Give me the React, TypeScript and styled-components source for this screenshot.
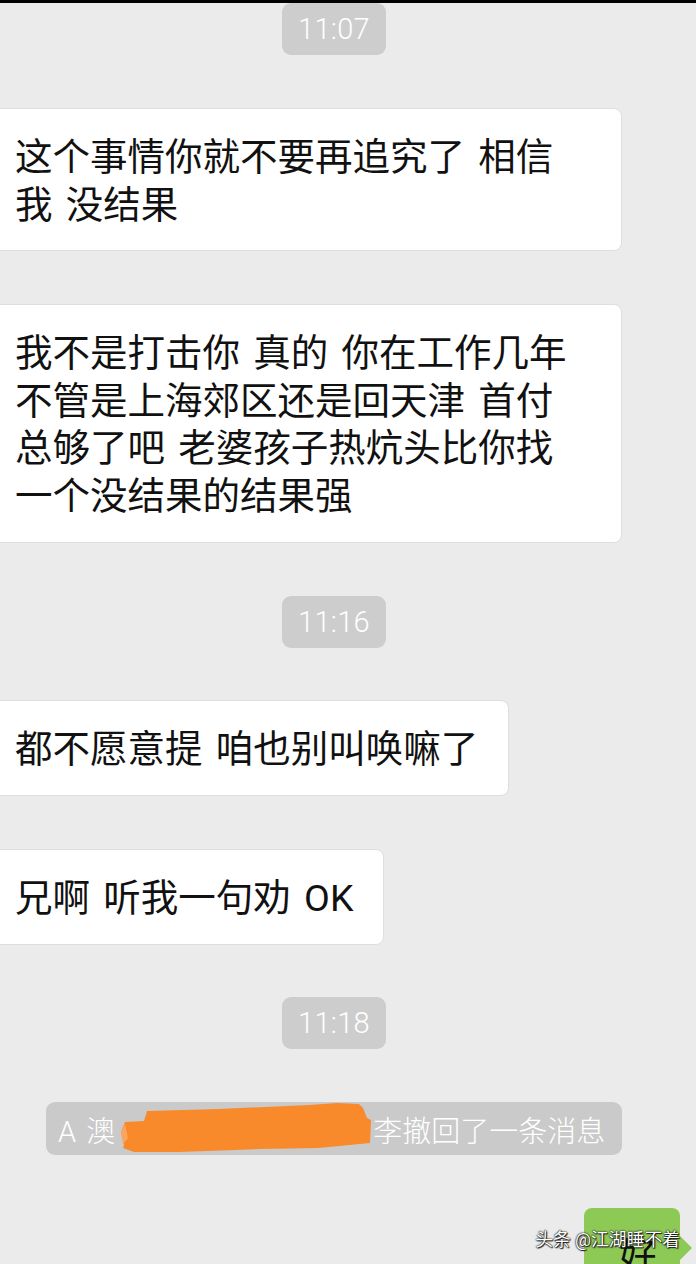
import React from "react";
import styled, { createGlobalStyle } from "styled-components";

const GlobalStyle = createGlobalStyle`
  html, body {
    margin: 0;
    padding: 0;
    background: #ebebeb;
    overflow: hidden;
  }
  * { box-sizing: border-box; }
`;

const FONT = `"Roboto", "Noto Sans CJK SC", "Noto Sans", sans-serif`;

const Screen = styled.div`
  position: relative;
  width: 696px;
  height: 1264px;
  overflow: hidden;
  background: #ebebeb;
  font-family: ${FONT};
`;

const StatusStrip = styled.div`
  height: 3px;
  background: #000;
`;

const Feed = styled.div`
  display: flex;
  flex-direction: column;
  gap: 52.8px;
`;

const CenterRow = styled.div`
  display: flex;
  justify-content: center;
  padding-right: 28px;
`;

const TimePill = styled.div`
  width: 104px;
  height: 52px;
  border-radius: 9px;
  background: #cdcdcd;
  color: #fff;
  font-size: 29px;
  font-weight: 300;
  display: flex;
  align-items: center;
  justify-content: center;
  letter-spacing: 0.3px;
`;

const IncomingRow = styled.div`
  display: flex;
  justify-content: flex-start;
  margin-left: -12px;
`;

const Bubble = styled.div<{ $wide?: boolean }>`
  width: ${(p) => (p.$wide ? "634px" : "auto")};
  background: #fff;
  border: 1px solid #dedede;
  border-radius: 8px;
  padding: 25px 30px 21px 26px;
  color: #111;
  font-size: 37.5px;
  line-height: 47.7px;
  white-space: pre-line;
  word-spacing: 4px;
`;

const NoticePill = styled.div`
  width: 576px;
  height: 53px;
  border-radius: 9px;
  background: #cacaca;
  color: #fff;
  font-size: 29px;
  font-weight: 300;
  display: flex;
  align-items: center;
  padding-left: 12px;
  white-space: nowrap;
  word-spacing: 3px;
`;

const Redaction = styled.svg`
  width: 252px;
  height: 53px;
  margin: 0 2px 0 4px;
  flex: none;
`;

const OutgoingRow = styled.div`
  display: flex;
  justify-content: flex-end;
  padding-right: 16px;
`;

const GreenBubble = styled.div`
  position: relative;
  width: 96px;
  height: 80px;
  background: #8dc955;
  border-radius: 8px;
  padding: 26px 0 0 35px;
  color: #111;
  font-size: 37.5px;
  line-height: 47.7px;

  &::after {
    content: "";
    position: absolute;
    right: -12px;
    top: 28px;
    border-style: solid;
    border-width: 12px 0 12px 12px;
    border-color: transparent transparent transparent #8dc955;
  }
`;

const Watermark = styled.div`
  position: absolute;
  right: 16px;
  bottom: 13px;
  color: #fff;
  font-family: ${FONT};
  font-size: 17.8px;
  line-height: 22px;
  text-shadow: 0 0 2px #000, 0 0 1px #000, 1px 1px 1px #222;
`;

export default function App() {
  return (
    <>
      <GlobalStyle />
      <Screen>
        <StatusStrip />
        <Feed>
          <CenterRow>
            <TimePill>11:07</TimePill>
          </CenterRow>
          <IncomingRow>
            <Bubble $wide>{"这个事情你就不要再追究了 相信\n我 没结果"}</Bubble>
          </IncomingRow>
          <IncomingRow>
            <Bubble $wide>
              {"我不是打击你 真的 你在工作几年\n不管是上海郊区还是回天津 首付\n总够了吧 老婆孩子热炕头比你找\n一个没结果的结果强"}
            </Bubble>
          </IncomingRow>
          <CenterRow>
            <TimePill>11:16</TimePill>
          </CenterRow>
          <IncomingRow>
            <Bubble>都不愿意提 咱也别叫唤嘛了</Bubble>
          </IncomingRow>
          <IncomingRow>
            <Bubble>兄啊 听我一句劝 OK</Bubble>
          </IncomingRow>
          <CenterRow>
            <TimePill>11:18</TimePill>
          </CenterRow>
          <CenterRow>
            <NoticePill>
              A 澳
              <Redaction viewBox="0 0 252 53" aria-hidden="true">
                <path
                  d="M5 43 L2 30 L6 20 L25 19 L28 9 L100 7 L190 3 L218 1 L240 2 L244 6 L248 16 L252 18 L251 41 L200 46 L142 47 L60 50 L15 50 L4 46 Z"
                  fill="#f98a2b"
                />
                <path d="M2 30 L6 22 L9 36 L4 42 Z" fill="#fba55e" />
              </Redaction>
              李撤回了一条消息
            </NoticePill>
          </CenterRow>
          <OutgoingRow>
            <GreenBubble>好</GreenBubble>
          </OutgoingRow>
        </Feed>
        <Watermark>头条 @江湖睡不着</Watermark>
      </Screen>
    </>
  );
}
